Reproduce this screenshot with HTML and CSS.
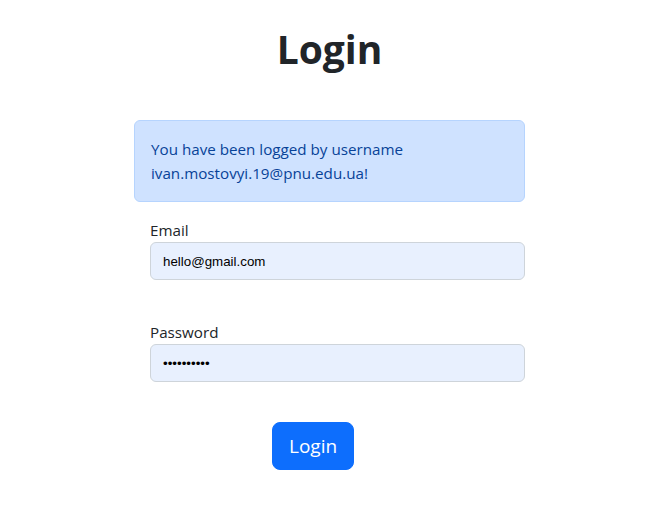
FILE: index.html
```html
<!DOCTYPE html>
<html lang="en">
<head>
<meta charset="utf-8">
<title>Login</title>
<link rel="stylesheet" href="styles.css">
</head>
<body>
<main class="page">
  <h1 class="title">Login</h1>
  <div class="alert">You have been logged by username ivan.mostovyi.19@pnu.edu.ua!</div>
  <form class="form">
    <div class="group group-email">
      <label class="label" for="email">Email</label>
      <input class="input" id="email" type="email" value="hello@gmail.com">
    </div>
    <div class="group">
      <label class="label" for="password">Password</label>
      <input class="input" id="password" type="password" value="1234567890">
    </div>
    <div class="actions">
      <button class="btn" type="button">Login</button>
    </div>
  </form>
</main>
</body>
</html>
```

FILE: styles.css
```css
* { box-sizing: border-box; }
html, body { margin: 0; background: #fff; }
body {
  padding: 0 9px 0 0;
  font-family: "Open Sans", "Noto Sans", sans-serif;
  font-size: 15.2px;
  line-height: 24px;
  color: #212529;
}
.page {
  width: 391px;
  margin: 0 auto;
}
.title {
  margin: 25px 0 0;
  font-size: 39px;
  line-height: 48px;
  font-weight: 700;
  text-align: center;
  color: #212529;
}
.alert {
  margin: 47px 0 16px;
  padding: 16px;
  border: 1px solid #b6d4fe;
  border-radius: 6px;
  background: #cfe2ff;
  color: #084298;
}
.form {
  padding-left: 16px;
}
.group-email {
  margin-bottom: 40px;
}
.label {
  display: block;
  line-height: 24px;
}
.input {
  display: block;
  width: 100%;
  height: 38px;
  padding: 0 12px;
  border: 1px solid #ced4da;
  border-radius: 6px;
  background: #e8f0fe;
  color: #000;
  font-family: "Liberation Sans", Arial, sans-serif;
  font-size: 13.33px;
  outline: none;
}
.actions {
  margin-top: 40px;
  padding-left: 122px;
}
.btn {
  display: block;
  height: 48px;
  padding: 0 16px;
  border: 1px solid #0d6efd;
  border-radius: 8px;
  background: #0d6efd;
  color: #fff;
  font-family: "Open Sans", "Noto Sans", sans-serif;
  font-size: 19px;
  line-height: 30px;
}
```
